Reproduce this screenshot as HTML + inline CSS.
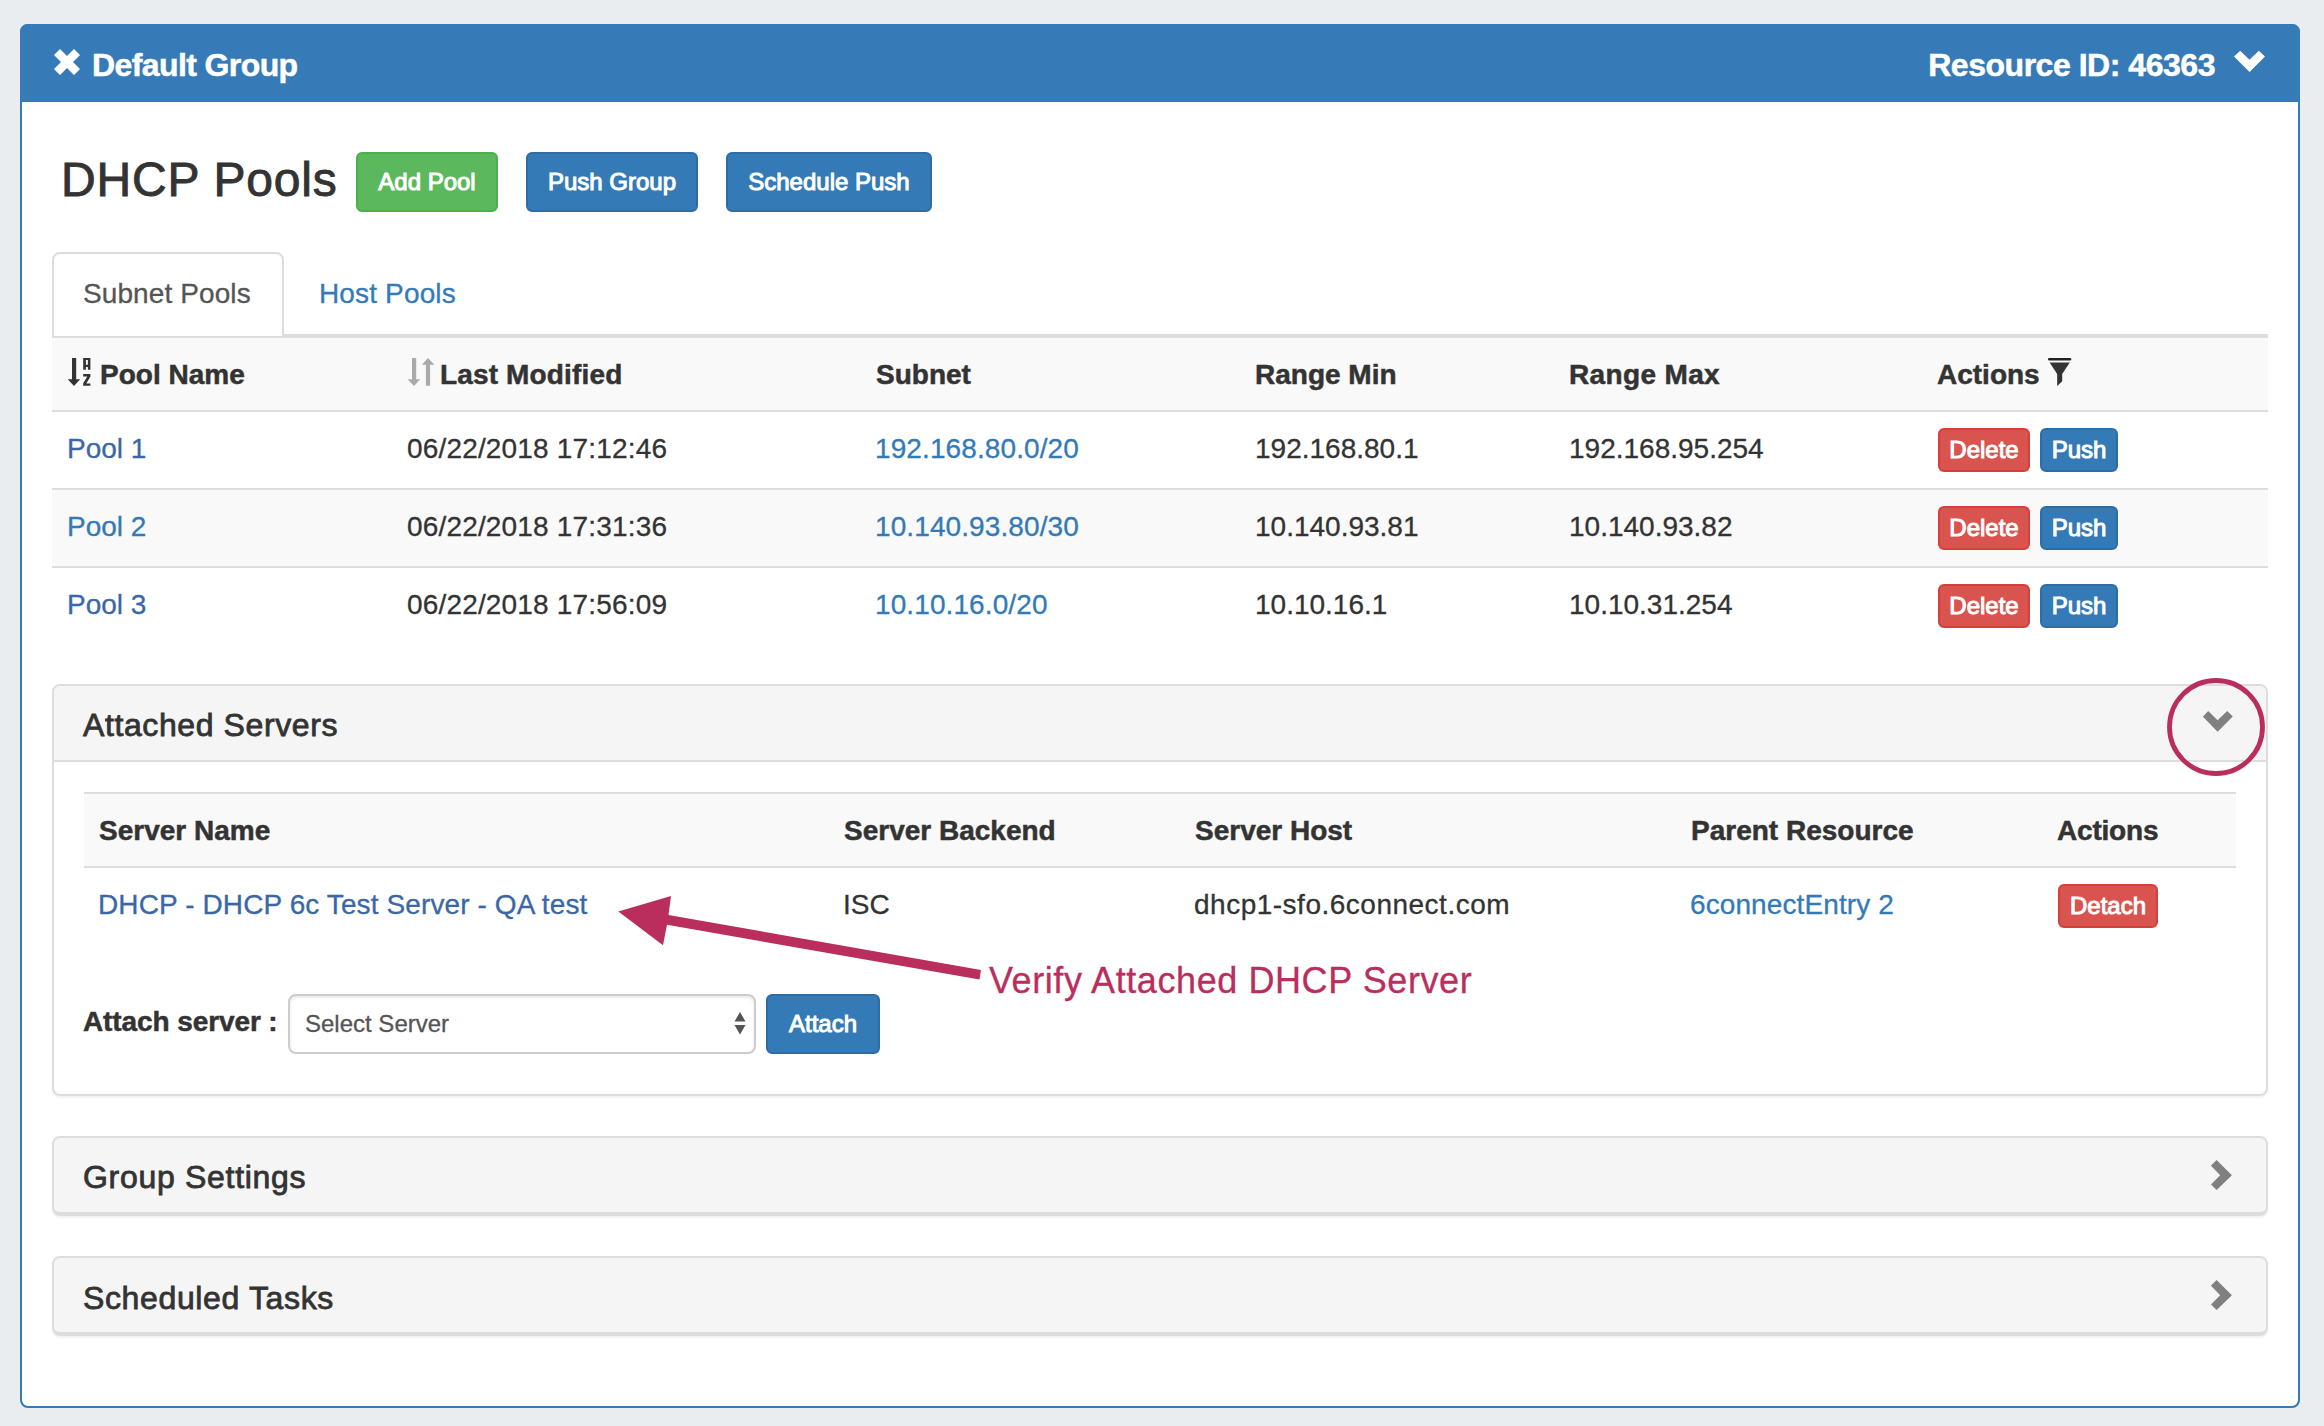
<!DOCTYPE html>
<html><head><meta charset="utf-8">
<style>
html,body{margin:0;padding:0;}
body{width:2324px;height:1426px;background:#e9edf0;position:relative;overflow:hidden;font-family:"Liberation Sans",sans-serif;color:#333;}
.a{position:absolute;box-sizing:border-box;}
.t{position:absolute;white-space:nowrap;line-height:1;-webkit-text-stroke-width:0.3px;}
.b{-webkit-text-stroke-width:0.5px;}
.b{font-weight:bold;}
.btn{position:absolute;box-sizing:border-box;color:#fff;-webkit-text-stroke:1px #fff;border-radius:6px;font-size:24px;text-align:center;white-space:nowrap;}
.pri{background:#337ab7;border:2px solid #2e6da4;}
.suc{background:#5cb85c;border:2px solid #4cae4c;}
.dan{background:#d9534f;border:2px solid #d43f3a;}
.lnk{color:#337ab7;}
.vis{color:#3a67a6;}
.hl{position:absolute;height:2px;background:#ddd;}
</style></head>
<body>
<!-- outer panel -->
<div class="a" style="left:20px;top:24px;width:2280px;height:1384px;border:2px solid #337ab7;border-radius:8px;background:#fff;"></div>
<div class="a" style="left:20px;top:24px;width:2280px;height:78px;background:#367bb7;border-radius:8px 8px 0 0;"></div>
<!-- X icon -->
<svg class="a" style="left:54px;top:49px" width="26" height="26" viewBox="0 0 26 26"><path d="M0 6 L6 0 L13 7 L20 0 L26 6 L19 13 L26 20 L20 26 L13 19 L6 26 L0 20 L7 13 Z" fill="#fff"/></svg>
<div class="t b" style="left:92px;top:49px;font-size:32px;color:#fff;letter-spacing:-0.6px;">Default Group</div>
<div class="t b" style="right:109px;top:49px;font-size:32px;color:#fff;letter-spacing:-0.47px;">Resource ID: 46363</div>
<svg class="a" style="left:2234px;top:51px" width="31" height="21" viewBox="0 0 31 21"><path d="M0 5.6 L6.2 -0.2 L15.5 8.8 L24.8 -0.2 L31 5.6 L15.6 21 Z" fill="#fff"/></svg>

<!-- DHCP Pools -->
<div class="t" style="left:61px;top:156px;font-size:48px;letter-spacing:0.8px;-webkit-text-stroke-width:0.9px;">DHCP Pools</div>
<div class="btn suc" style="left:356px;top:152px;width:142px;height:60px;line-height:56px;">Add Pool</div>
<div class="btn pri" style="left:526px;top:152px;width:172px;height:60px;line-height:56px;">Push Group</div>
<div class="btn pri" style="left:726px;top:152px;width:206px;height:60px;line-height:56px;">Schedule Push</div>

<!-- tabs -->
<div class="hl" style="left:52px;top:334px;width:2216px;"></div>
<div class="a" style="left:52px;top:252px;width:232px;height:84px;border:2px solid #ddd;border-bottom:none;border-radius:8px 8px 0 0;background:#fff;"></div>
<div class="t" style="left:83px;top:280px;font-size:28px;color:#555;letter-spacing:0.1px;">Subnet Pools</div>
<div class="t lnk" style="left:319px;top:280px;font-size:28px;letter-spacing:0.15px;">Host Pools</div>

<!-- pools table -->
<div class="hl" style="left:52px;top:336px;width:2216px;"></div>
<div class="a" style="left:52px;top:338px;width:2216px;height:72px;background:#f9f9f9;"></div>
<div class="hl" style="left:52px;top:410px;width:2216px;"></div>
<div class="hl" style="left:52px;top:488px;width:2216px;"></div>
<div class="a" style="left:52px;top:490px;width:2216px;height:76px;background:#f9f9f9;"></div>
<div class="hl" style="left:52px;top:566px;width:2216px;"></div>

<!-- header icons -->
<svg class="a" style="left:67px;top:357px" width="25" height="30" viewBox="0 0 25 30">
 <path d="M5 1 H9.2 V22.2 H13.2 L7 29 L0.7 22.2 H5 Z" fill="#333"/>
 <path d="M16.2 1 H23.4 V12.7 H20.9 V10 H18.9 V12.7 H16.2 Z M18.9 3.1 V7.8 H20.9 V3.1 Z" fill="#333" fill-rule="evenodd"/>
 <path d="M16.2 17.1 H23.4 V19.6 L19.3 26.5 H23.4 V28.8 H16.2 V26.3 L20.3 19.4 H16.2 Z" fill="#333"/>
</svg>
<div class="t b" style="left:100px;top:361px;font-size:28px;">Pool Name</div>
<svg class="a" style="left:407px;top:357px" width="28" height="30" viewBox="0 0 28 30">
 <path d="M5 1 H9.2 V22.2 H13.2 L7 29 L0.7 22.2 H5 Z" fill="#aaa"/>
 <path d="M21 1 L27.4 7.8 H23.1 V28.8 H18.9 V7.8 H14.8 Z" fill="#aaa"/>
</svg>
<div class="t b" style="left:440px;top:361px;letter-spacing:0.15px;font-size:28px;">Last Modified</div>
<div class="t b" style="left:876px;top:361px;font-size:28px;">Subnet</div>
<div class="t b" style="left:1255px;top:361px;font-size:28px;">Range Min</div>
<div class="t b" style="left:1569px;top:361px;letter-spacing:0.35px;font-size:28px;">Range Max</div>
<div class="t b" style="left:1937px;top:361px;font-size:28px;">Actions</div>
<svg class="a" style="left:2047px;top:357px" width="25" height="30" viewBox="0 0 25 30">
 <rect x="1" y="1" width="23.2" height="2.4" rx="1.2" fill="#222"/>
 <path d="M2.6 5.6 H22.8 L15.2 17 V24.2 L10.2 29 V17 Z" fill="#333"/>
</svg>

<!-- rows -->
<div class="t vis" style="left:67px;top:435px;font-size:28px;">Pool 1</div>
<div class="t" style="left:407px;top:435px;letter-spacing:0.17px;font-size:28px;">06/22/2018 17:12:46</div>
<div class="t lnk" style="left:875px;top:435px;letter-spacing:0.1px;font-size:28px;">192.168.80.0/20</div>
<div class="t" style="left:1255px;top:435px;font-size:28px;">192.168.80.1</div>
<div class="t" style="left:1569px;top:435px;font-size:28px;">192.168.95.254</div>
<div class="btn dan" style="left:1938px;top:428px;width:92px;height:44px;line-height:40px;">Delete</div>
<div class="btn pri" style="left:2040px;top:428px;width:78px;height:44px;line-height:40px;">Push</div>

<div class="t lnk" style="left:67px;top:513px;font-size:28px;">Pool 2</div>
<div class="t" style="left:407px;top:513px;letter-spacing:0.17px;font-size:28px;">06/22/2018 17:31:36</div>
<div class="t lnk" style="left:875px;top:513px;letter-spacing:0.1px;font-size:28px;">10.140.93.80/30</div>
<div class="t" style="left:1255px;top:513px;font-size:28px;">10.140.93.81</div>
<div class="t" style="left:1569px;top:513px;font-size:28px;">10.140.93.82</div>
<div class="btn dan" style="left:1938px;top:506px;width:92px;height:44px;line-height:40px;">Delete</div>
<div class="btn pri" style="left:2040px;top:506px;width:78px;height:44px;line-height:40px;">Push</div>

<div class="t vis" style="left:67px;top:591px;font-size:28px;">Pool 3</div>
<div class="t" style="left:407px;top:591px;letter-spacing:0.17px;font-size:28px;">06/22/2018 17:56:09</div>
<div class="t lnk" style="left:875px;top:591px;letter-spacing:0.1px;font-size:28px;">10.10.16.0/20</div>
<div class="t" style="left:1255px;top:591px;font-size:28px;">10.10.16.1</div>
<div class="t" style="left:1569px;top:591px;font-size:28px;">10.10.31.254</div>
<div class="btn dan" style="left:1938px;top:584px;width:92px;height:44px;line-height:40px;">Delete</div>
<div class="btn pri" style="left:2040px;top:584px;width:78px;height:44px;line-height:40px;">Push</div>

<!-- Attached Servers panel -->
<div class="a" style="left:52px;top:684px;width:2216px;height:412px;border:2px solid #ddd;border-radius:8px;background:#fff;box-shadow:0 2px 2px rgba(0,0,0,.05);"></div>
<div class="a" style="left:54px;top:686px;width:2212px;height:76px;background:#f5f5f5;border-bottom:2px solid #ddd;border-radius:6px 6px 0 0;"></div>
<div class="t" style="left:83px;top:709px;font-size:32px;letter-spacing:0.6px;-webkit-text-stroke-width:0.8px;">Attached Servers</div>
<svg class="a" style="left:2203px;top:711px" width="30" height="21" viewBox="0 0 30 21"><path d="M-0.2 5.6 L5.2 0 L14.6 9.2 L24.2 0 L29.8 5.6 L14.6 20.8 Z" fill="#808080"/></svg>

<div class="hl" style="left:84px;top:792px;width:2152px;"></div>
<div class="a" style="left:84px;top:794px;width:2152px;height:72px;background:#f9f9f9;"></div>
<div class="hl" style="left:84px;top:866px;width:2152px;"></div>
<div class="t b" style="left:99px;top:817px;font-size:28px;">Server Name</div>
<div class="t b" style="left:844px;top:817px;font-size:28px;">Server Backend</div>
<div class="t b" style="left:1195px;top:817px;font-size:28px;">Server Host</div>
<div class="t b" style="left:1691px;top:817px;font-size:28px;">Parent Resource</div>
<div class="t b" style="left:2057px;top:817px;letter-spacing:-0.2px;font-size:28px;">Actions</div>

<div class="t vis" style="left:98px;top:891px;font-size:28px;letter-spacing:0.11px;">DHCP - DHCP 6c Test Server - QA test</div>
<div class="t" style="left:843px;top:891px;font-size:28px;">ISC</div>
<div class="t" style="left:1194px;top:891px;font-size:28px;letter-spacing:0.5px;">dhcp1-sfo.6connect.com</div>
<div class="t lnk" style="left:1690px;top:891px;font-size:28px;letter-spacing:0.1px;">6connectEntry 2</div>
<div class="btn dan" style="left:2058px;top:884px;width:100px;height:44px;line-height:40px;">Detach</div>

<div class="t b" style="left:83px;top:1008px;font-size:28px;letter-spacing:-0.1px;">Attach server :</div>
<div class="a" style="left:288px;top:994px;width:468px;height:60px;border:2px solid #ccc;border-radius:8px;background:#fff;box-shadow:inset 0 2px 3px rgba(0,0,0,.09);"></div>
<div class="t" style="left:305px;top:1012px;font-size:24px;color:#555;">Select Server</div>
<svg class="a" style="left:734px;top:1012px" width="12" height="23" viewBox="0 0 12 23"><path d="M6 0 L11.5 9.5 H0.5 Z M0.5 13 H11.5 L6 22.5 Z" fill="#555"/></svg>
<div class="btn pri" style="left:766px;top:994px;width:114px;height:60px;line-height:56px;">Attach</div>

<!-- Group Settings -->
<div class="a" style="left:52px;top:1136px;width:2216px;height:80px;border:2px solid #ddd;border-bottom-width:4px;border-radius:8px;background:#f5f5f5;box-shadow:0 2px 2px rgba(0,0,0,.05);"></div>
<div class="t" style="left:83px;top:1161px;font-size:32px;letter-spacing:0.7px;-webkit-text-stroke-width:0.8px;">Group Settings</div>
<svg class="a" style="left:2211px;top:1160px" width="21" height="30" viewBox="0 0 21 30"><path d="M-0.1 5.6 L5.65 0 L20.9 15.24 L5.65 30 L-0.1 24.5 L9.16 15.24 Z" fill="#808080"/></svg>

<!-- Scheduled Tasks -->
<div class="a" style="left:52px;top:1256px;width:2216px;height:80px;border:2px solid #ddd;border-bottom-width:4px;border-radius:8px;background:#f5f5f5;box-shadow:0 2px 2px rgba(0,0,0,.05);"></div>
<div class="t" style="left:83px;top:1282px;font-size:32px;letter-spacing:0.64px;-webkit-text-stroke-width:0.8px;">Scheduled Tasks</div>
<svg class="a" style="left:2211px;top:1280px" width="21" height="30" viewBox="0 0 21 30"><path d="M-0.1 5.6 L5.65 0 L20.9 15.24 L5.65 30 L-0.1 24.5 L9.16 15.24 Z" fill="#808080"/></svg>

<!-- annotations -->
<svg class="a" style="left:0;top:0" width="2324" height="1426" viewBox="0 0 2324 1426">
 <circle cx="2216" cy="727" r="46.5" fill="none" stroke="#b92e5d" stroke-width="4.8"/>
 <path d="M618.3 911.5 L671 896 L668.5 915 L981 970 L979.5 979.5 L667 924.8 L663 945.3 Z" fill="#b92e5d"/>
</svg>
<div class="t" style="left:989px;top:963px;font-size:36px;letter-spacing:0.58px;color:#b92e5d;">Verify Attached DHCP Server</div>
</body></html>
